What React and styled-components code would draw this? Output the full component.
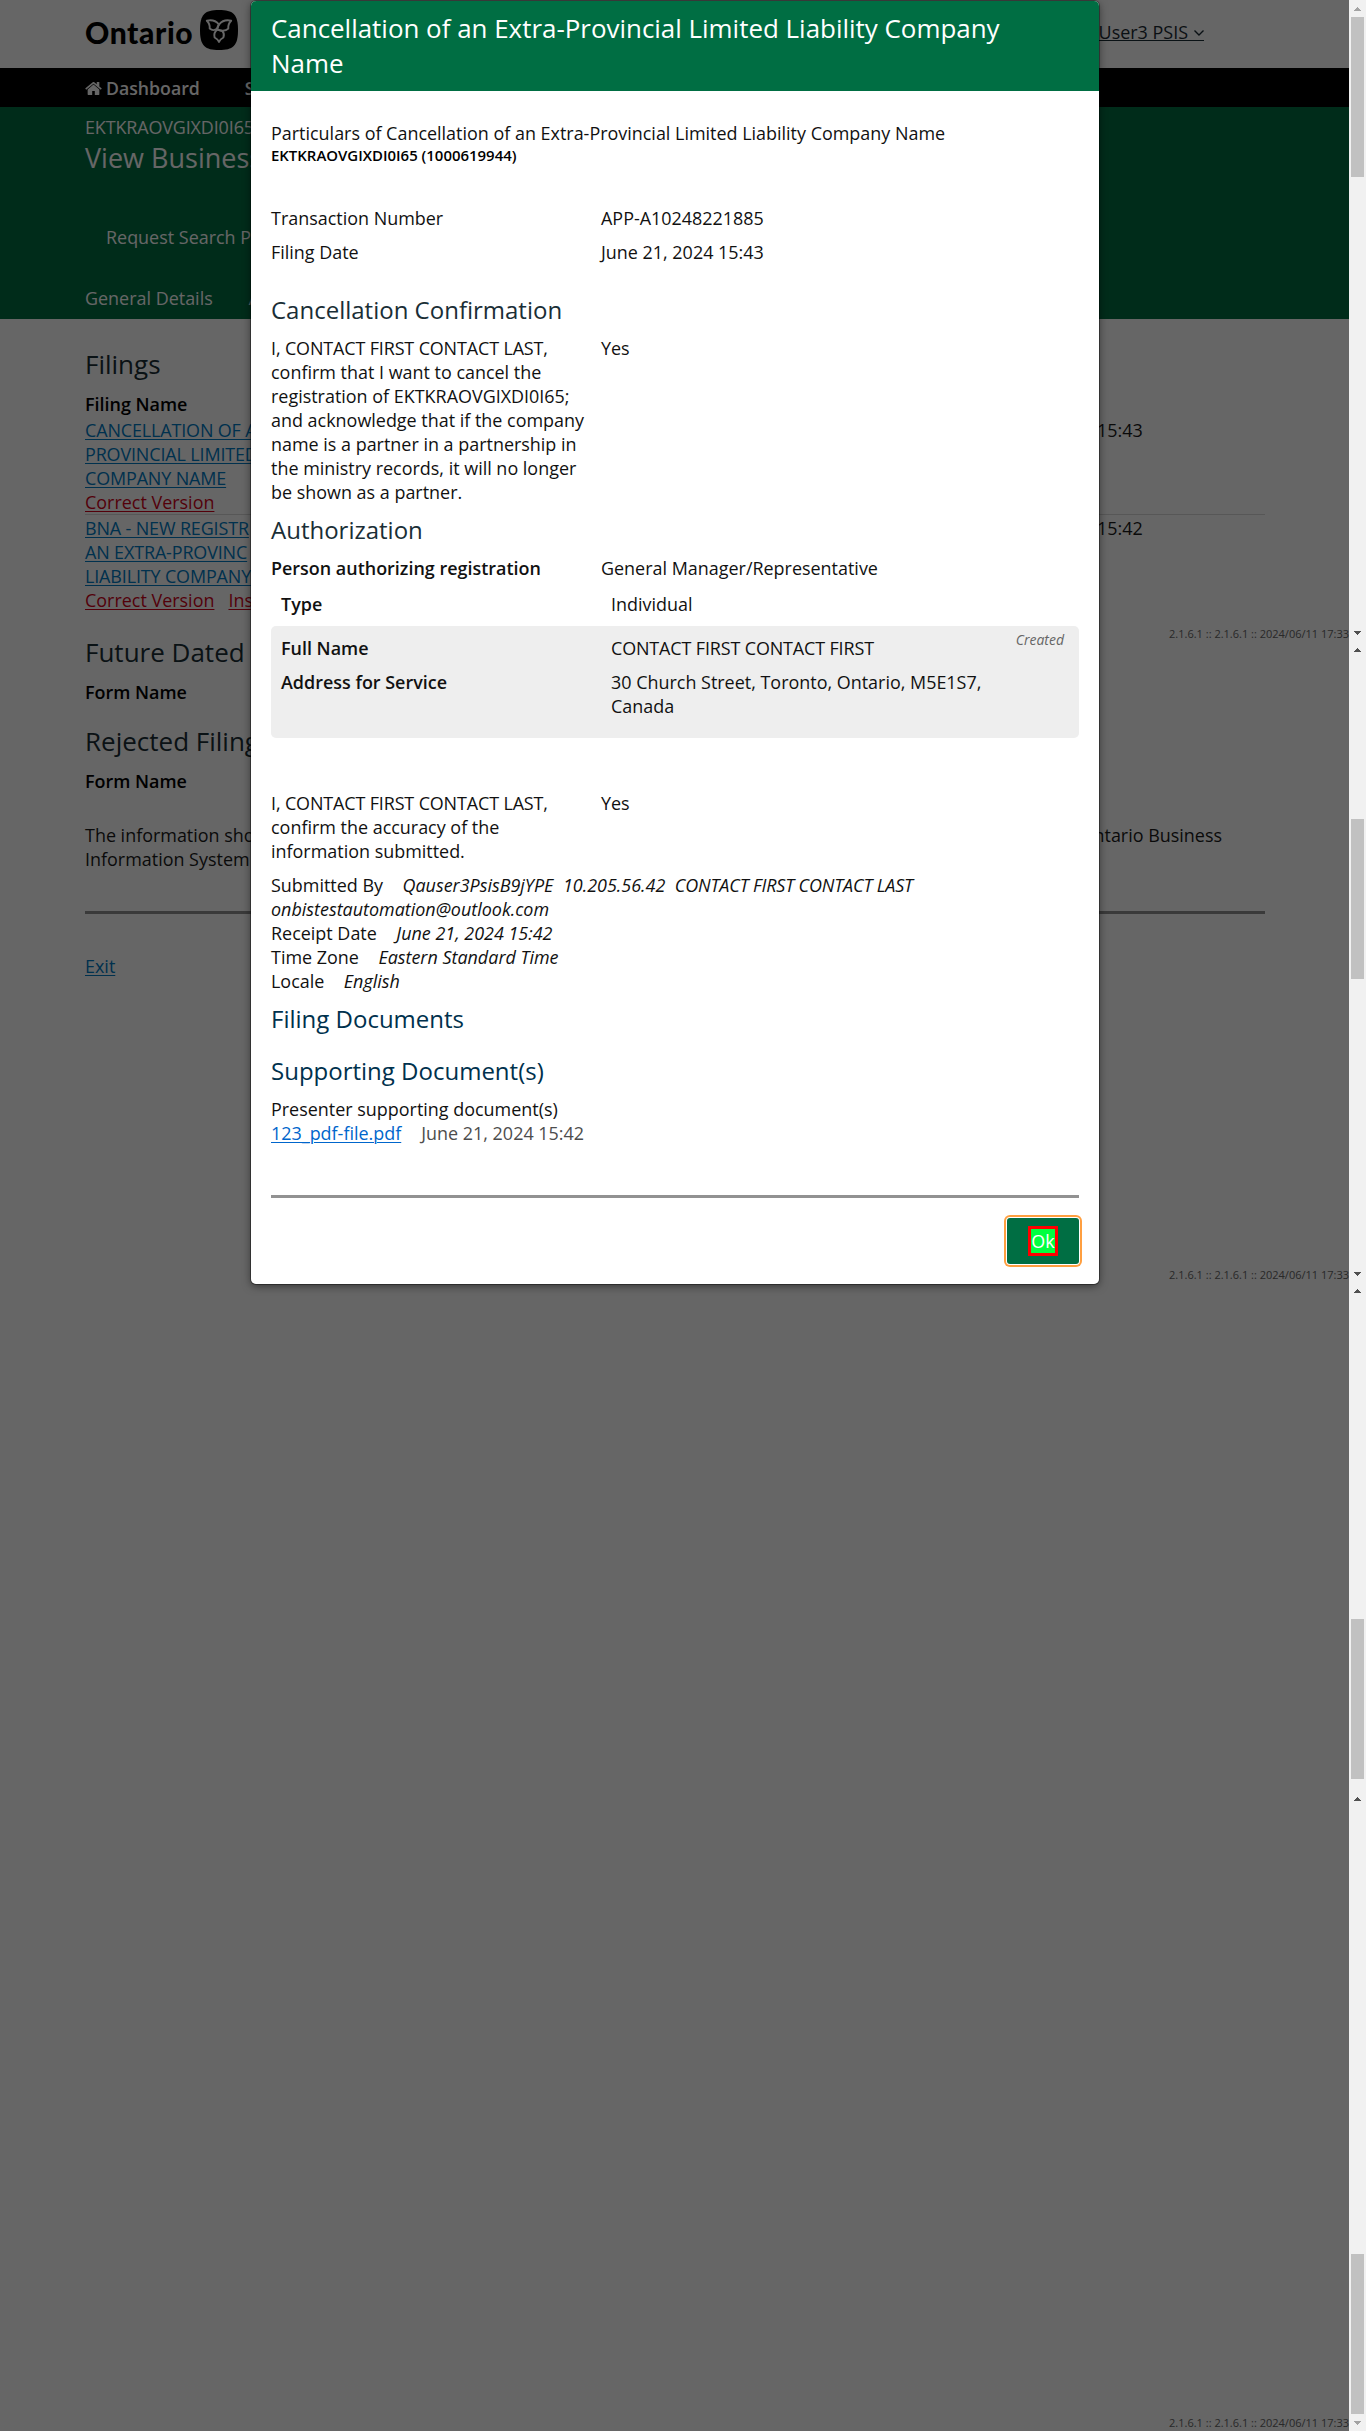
import React from "react";
import styled, { createGlobalStyle, css } from "styled-components";

const GlobalStyle = createGlobalStyle`
  *, *::before, *::after { box-sizing: border-box; }
  html, body { margin: 0; padding: 0; }
  body {
    font-family: "Open Sans", "Noto Sans", sans-serif;
    font-size: 17.94px;
    line-height: 24px;
    color: #1a1a1a;
    background: #fff;
  }
`;

const Shell = styled.div`
  display: flex;
  width: 1366px;
  height: 2431px;
  overflow: hidden;
`;

const Viewport = styled.div`
  position: relative;
  width: 1349px;
  height: 2431px;
  overflow: hidden;
  white-space: nowrap;
`;

const TopBar = styled.header`
  display: flex;
  justify-content: space-between;
  align-items: flex-start;
  height: 68px;
  padding: 10px 145px 0 85px;
`;

const Brand = styled.div`
  display: flex;
  gap: 8px;
`;

const BrandName = styled.span`
  width: 107px;
  padding-top: 2px;
  font: 900 30px/40px Lato, sans-serif;
  letter-spacing: 0.6px;
  color: #000;
`;

const UserMenu = styled.a`
  display: flex;
  align-items: flex-start;
  gap: 6px;
  height: 21px;
  margin-top: 10px;
  border-bottom: 1px solid #1a2e36;
  color: #1b2a33;

  svg { margin-top: 10px; }
`;

const NavBar = styled.nav`
  display: flex;
  gap: 45px;
  height: 39px;
  padding: 8px 85px 0;
  background: #000;
  color: #fff;
  font-size: 17.7px;
  font-weight: 600;
`;

const NavItem = styled.span`
  display: flex;
  gap: 4px;

  svg { margin-top: 6px; }
`;

const Banner = styled.section`
  height: 212px;
  padding: 8px 85px 0;
  background: #006e43;
  color: #fff;
`;

const BannerTitle = styled.h1`
  margin: 1px 0 49px;
  font-size: 27px;
  line-height: 36px;
  font-weight: 400;
`;

const BannerAction = styled.div`
  padding-left: 21px;
`;

const Tabs = styled.div`
  display: flex;
  gap: 36px;
  margin-top: 37px;
`;

const Main = styled.main`
  width: 1180px;
  margin-left: 85px;
  padding-top: 27px;
`;

const SectionTitle = styled.h2`
  margin: ${(p) => p.$top || 0}px 0 ${(p) => p.$bottom ?? 10}px;
  font-size: ${(p) => p.$size || 24}px;
  line-height: 36px;
  font-weight: 400;
  color: ${(p) => p.$color || "#1a2e36"};
`;

const Strong = styled.div`
  font-weight: 600;
  color: #000;
`;

const FilingRow = styled.div`
  display: grid;
  grid-template-columns: 895px 1fr;
  padding-top: 1px;
  ${(p) => p.$ruled && css`
    padding-top: 2px;
    border-bottom: 1px solid #d9d9d9;
  `}
`;

const Link = styled.a`
  color: ${(p) => (p.$danger ? "#d0021b" : p.$muted ? "#007ac2" : "#0066cc")};
  text-decoration: underline;
  text-underline-offset: 2px;
  text-decoration-thickness: 1px;
`;

const Caps = styled.span`
  letter-spacing: -0.13px;
`;

const FilingLinks = styled.div`
  display: flex;
  gap: 14px;
`;

const Disclaimer = styled.p`
  margin: 30px 0 40px;
`;

const DisclaimerLine = styled.span`
  display: flex;
  justify-content: space-between;
  width: 1137px;
`;

const Rule = styled.hr`
  height: 3px;
  margin: 0;
  border: 0;
  background: #929292;
`;

const ExitRow = styled.div`
  margin-top: 40px;
`;

const Version = styled.span`
  position: absolute;
  right: 0;
  top: ${(p) => p.$top}px;
  font-size: 11px;
  line-height: 16px;
  color: #666;
`;

const Backdrop = styled.div`
  position: absolute;
  inset: 0;
  background: rgba(0, 0, 0, 0.6);
`;

const Dialog = styled.section`
  position: absolute;
  left: 251px;
  top: 1px;
  width: 848px;
  height: 1283px;
  border-radius: 5px;
  overflow: hidden;
  background: #fff;
  white-space: normal;
  color: #111;
`;

const DialogShadow = styled.div`
  position: absolute;
  left: 251px;
  top: 1px;
  width: 848px;
  height: 1283px;
  border-radius: 5px;
  box-shadow: 0 0 0 1px rgba(0, 0, 0, 0.35), 0 2px 8px rgba(0, 0, 0, 0.5);
`;

const DialogTitle = styled.h2`
  margin: 0;
  padding: 10px 20px;
  height: 90px;
  background: #006e43;
  color: #fff;
  font-size: 25.93px;
  line-height: 35px;
  font-weight: 400;
`;

const DialogBody = styled.div`
  padding: 30px 20px 0;
`;

const EntityName = styled.div`
  margin-bottom: 41px;
  font-size: 14.95px;
  line-height: 20px;
  font-weight: 600;
  color: #000;
`;

const Field = styled.div`
  display: grid;
  grid-template-columns: 320px 390px;
  column-gap: 10px;
  margin-top: ${(p) => p.$top || 0}px;
  margin-left: ${(p) => (p.$inset ? 10 : 0)}px;

  > :first-child { font-weight: ${(p) => (p.$bold ? 600 : 400)}; }
`;

const Card = styled.div`
  position: relative;
  height: 112px;
  margin: 10px 0 53px;
  padding-top: 10px;
  border-radius: 5px;
  background: #eee;
`;

const Tag = styled.em`
  position: absolute;
  right: 15px;
  top: 3px;
  font-size: 14px;
  line-height: 21px;
  color: #666;
`;

const Receipt = styled.div`
  margin-top: 10px;
`;

const ReceiptLine = styled.div`
  display: flex;
  gap: 19.5px;
`;

const ReceiptValues = styled.em`
  display: flex;
  gap: 9.5px;
`;

const Documents = styled.div`
  margin-bottom: 50px;
`;

const DocumentRow = styled.div`
  display: flex;
  gap: 20px;
  color: #4d4d4d;
`;

const Actions = styled.div`
  display: flex;
  justify-content: flex-end;
  margin-top: 20px;
`;

const OkButton = styled.button`
  display: flex;
  align-items: center;
  justify-content: center;
  width: 72px;
  height: 46px;
  padding: 0;
  border: 0;
  border-radius: 3px;
  background: #006e43;
  box-shadow: 0 0 0 1px #fff, 0 0 0 3px #ff9f40;
`;

const OkLabel = styled.span`
  width: 30px;
  height: 30px;
  border: 3px solid #f00;
  background: #00ff40;
  color: #fff;
  font: 400 17.9px/24px "Open Sans", sans-serif;
`;

const ScrollRail = styled.div`
  display: flex;
  flex-direction: column;
  width: 17px;
  background: #f1f1f1;
`;

const ScrollTrack = styled.div`
  display: flex;
  flex-direction: column;
  align-items: center;
  height: ${(p) => p.$height}px;
  overflow: hidden;
`;

const Arrow = styled.i`
  flex: none;
  width: 17px;
  height: 17px;
  display: flex;
`;

const Thumb = styled.div`
  flex: none;
  width: 13px;
  height: 160px;
  margin-top: ${(p) => p.$offset}px;
  margin-bottom: auto;
  background: #c1c1c1;
`;

function ScrollArrow({ down, dim }) {
  return (
    <Arrow>
      <svg width="17" height="17" shapeRendering="crispEdges" fill={dim ? "#a3a3a3" : "#505050"}>
        <path d={down ? "M5 7h7L8.5 11z" : "M5 11h7L8.5 7z"} />
      </svg>
    </Arrow>
  );
}

function Scrollbar({ height, offset, first, last, cut }) {
  return (
    <ScrollTrack $height={height}>
      <ScrollArrow dim={first} />
      <Thumb $offset={offset} />
      {!cut && <ScrollArrow down dim={last} />}
    </ScrollTrack>
  );
}

function HomeIcon() {
  return (
    <svg width="17" height="13" viewBox="0 256 1664 1280" fill="currentColor">
      <path d="M1408 992v480q0 26-19 45t-45 19h-384v-384h-256v384h-384q-26 0-45-19t-19-45v-480q0-1 .5-3t.5-3l575-474 575 474q1 2 1 6zm223-69l-62 74q-8 9-21 11h-3q-13 0-21-7l-692-577-692 577q-12 8-24 7-13-2-21-11l-62-74q-8-10-7-23.5t11-21.5l719-599q32-26 76-26t76 26l244 204v-195q0-14 9-23t23-9h192q14 0 23 9t9 23v408l219 182q10 8 11 21.5t-7 23.5z" />
    </svg>
  );
}

function Trillium() {
  return (
    <svg width="38" height="40" viewBox="0 0 38 40" fill="none">
      <path d="M19 0C33 0 38 4 38 20S33 40 19 40 0 36 0 20 5 0 19 0Z" fill="#000" />
      <g stroke="#fff" strokeWidth="1.9" strokeLinejoin="round" strokeLinecap="round">
        <path d="M6.8 10.7C11 9.7 15.8 10.6 18.8 14.3L17.2 18.6C14.6 20.6 11.6 20.2 9.7 18.6C10 15.6 9 12.8 6.8 10.7Z" />
        <path d="M31.2 10.7C27 9.7 22.2 10.6 19.2 14.3C17.8 16 17.2 17.6 17.4 19.4C20 21 25.4 21.6 28.3 18.6C28 15.6 29 12.8 31.2 10.7Z" />
        <path d="M19 32C18.2 30 16.6 28.6 14.6 27.5C13.8 24.4 15 21.4 17.4 19.6L22.4 21C24 22.8 24.2 25.4 23.4 27.5C21.4 28.6 19.8 30 19 32Z" />
      </g>
    </svg>
  );
}

function Filing({ lines, time, ruled, actions }) {
  return (
    <FilingRow $ruled={ruled}>
      <div>
        {lines.map((l) => (
          <div key={l}><Link $muted><Caps>{l}</Caps></Link></div>
        ))}
        <FilingLinks>
          {actions.map((a) => <Link $danger key={a}>{a}</Link>)}
        </FilingLinks>
      </div>
      <div>June 21, 2024 {time}</div>
    </FilingRow>
  );
}

export default function App() {
  return (
    <>
      <GlobalStyle />
      <Shell>
        <Viewport>
          <TopBar>
            <Brand><BrandName>Ontario</BrandName><Trillium /></Brand>
            <UserMenu>
              User3 PSIS
              <svg width="10" height="6" fill="none" stroke="#1b2a33" strokeWidth="1.4"><path d="M.5.5 5 5 9.5.5" /></svg>
            </UserMenu>
          </TopBar>
          <NavBar>
            <NavItem><HomeIcon />Dashboard</NavItem>
            <NavItem>S</NavItem>
          </NavBar>
          <Banner>
            <div><Caps>EKTKRAOVGIXDI0I65</Caps></div>
            <BannerTitle>View Business</BannerTitle>
            <BannerAction>Request Search P</BannerAction>
            <Tabs><span>General Details</span><span>A</span></Tabs>
          </Banner>
          <Main>
            <SectionTitle $size={26}>Filings</SectionTitle>
            <Strong>Filing Name</Strong>
            <Filing
              ruled
              time="15:43"
              lines={["CANCELLATION OF AN", "PROVINCIAL LIMITED", "COMPANY NAME"]}
              actions={["Correct Version"]}
            />
            <Filing
              time="15:42"
              lines={["BNA - NEW REGISTR", "AN EXTRA-PROVINC", "LIABILITY COMPANY"]}
              actions={["Correct Version", "Ins"]}
            />
            <SectionTitle $size={26} $top={22} $bottom={10}>Future Dated</SectionTitle>
            <Strong>Form Name</Strong>
            <SectionTitle $size={26} $top={19} $bottom={10}>Rejected Filing</SectionTitle>
            <Strong>Form Name</Strong>
            <Disclaimer>
              <DisclaimerLine><span>The information sho</span><span>Ontario Business</span></DisclaimerLine>
              Information System
            </Disclaimer>
            <Rule />
            <ExitRow><Link $muted>Exit</Link></ExitRow>
          </Main>
          {[626, 1267, 2415].map((top) => (
            <Version $top={top} key={top}>2.1.6.1 :: 2.1.6.1 :: 2024/06/11 17:33</Version>
          ))}
          <Backdrop />
          <DialogShadow />
          <Dialog>
            <DialogTitle>Cancellation of an Extra-Provincial Limited Liability Company<br />Name</DialogTitle>
            <DialogBody>
              <div>Particulars of Cancellation of an Extra-Provincial Limited Liability Company Name</div>
              <EntityName>EKTKRAOVGIXDI0I65 (1000619944)</EntityName>
              <Field><span>Transaction Number</span><span>APP-A10248221885</span></Field>
              <Field $top={10}><span>Filing Date</span><span>June 21, 2024 15:43</span></Field>
              <SectionTitle $top={28} $bottom={8}>Cancellation Confirmation</SectionTitle>
              <Field>
                <span>
                  <Caps>I, CONTACT FIRST CONTACT LAST,</Caps><br />confirm that I want to cancel the<br />
                  registration of EKTKRAOVGIXDI0I65;<br />and acknowledge that if the company<br />
                  name is a partner in a partnership in<br />the ministry records, it will no longer<br />
                  be shown as a partner.
                </span>
                <span>Yes</span>
              </Field>
              <SectionTitle $top={8} $bottom={8}>Authorization</SectionTitle>
              <Field $bold><span>Person authorizing registration</span><span>General Manager/Representative</span></Field>
              <Field $bold $inset $top={12}><span>Type</span><span>Individual</span></Field>
              <Card>
                <Tag>Created</Tag>
                <Field $bold $inset><span>Full Name</span><Caps>CONTACT FIRST CONTACT FIRST</Caps></Field>
                <Field $bold $inset $top={10}>
                  <span>Address for Service</span>
                  <span>30 Church Street, Toronto, Ontario, M5E1S7,<br />Canada</span>
                </Field>
              </Card>
              <Field>
                <span><Caps>I, CONTACT FIRST CONTACT LAST,</Caps><br />confirm the accuracy of the<br />information submitted.</span>
                <span>Yes</span>
              </Field>
              <Receipt>
                <ReceiptLine>
                  <span>Submitted By</span>
                  <ReceiptValues>
                    <span>Qauser3PsisB9jYPE</span><span>10.205.56.42</span><Caps>CONTACT FIRST CONTACT LAST</Caps>
                  </ReceiptValues>
                </ReceiptLine>
                <em>onbistestautomation@outlook.com</em>
                <ReceiptLine><span>Receipt Date</span><em>June 21, 2024 15:42</em></ReceiptLine>
                <ReceiptLine><span>Time Zone</span><em>Eastern Standard Time</em></ReceiptLine>
                <ReceiptLine><span>Locale</span><em>English</em></ReceiptLine>
              </Receipt>
              <SectionTitle $top={8} $bottom={16} $color="#00314d">Filing Documents</SectionTitle>
              <SectionTitle $bottom={8} $color="#00314d">Supporting Document(s)</SectionTitle>
              <Documents>
                <div>Presenter supporting document(s)</div>
                <DocumentRow><Link>123_pdf-file.pdf</Link><span>June 21, 2024 15:42</span></DocumentRow>
              </Documents>
              <Rule />
              <Actions><OkButton><OkLabel>Ok</OkLabel></OkButton></Actions>
            </DialogBody>
          </Dialog>
        </Viewport>
        <ScrollRail>
          <Scrollbar height={641} offset={0} first />
          <Scrollbar height={641} offset={161} />
          <Scrollbar height={508} offset={320} cut />
          <Scrollbar height={641} offset={447} last />
        </ScrollRail>
      </Shell>
    </>
  );
}
